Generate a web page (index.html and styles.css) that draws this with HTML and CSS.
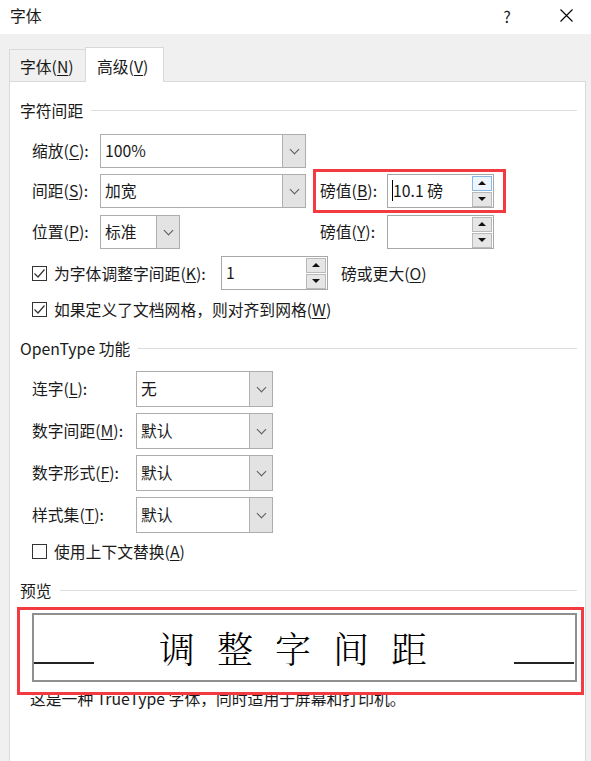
FILE: index.html
```html
<!DOCTYPE html>
<html lang="zh-CN">
<head>
  <meta charset="UTF-8" />
  <meta name="viewport" content="width=device-width, initial-scale=1.0" />
  <title>字体</title>
  <link rel="stylesheet" href="styles.css">
</head>
<body>
  <div class="dialog">

    <!-- Title bar -->
    <div class="title-bar">
      <div class="title">字体</div>
      <div class="title-btn help">?</div>
      <div class="title-btn close">
        <svg width="13" height="13" viewBox="0 0 13 13">
          <path d="M0.5 0.5 L12.5 12.5 M12.5 0.5 L0.5 12.5" stroke="#000" stroke-width="1.1" fill="none"/>
        </svg>
      </div>
    </div>

    <!-- Tabs -->
    <div class="tabs">
      <div class="tab">字体(<u>N</u>)</div>
      <div class="tab active">高级(<u>V</u>)</div>
    </div>

    <div class="panel">

      <!-- 字符间距 -->
      <div class="group-title">字符间距</div>

      <div class="row first">
        <div class="row-left">
          <span class="lbl">缩放(<u>C</u>):</span>
          <div class="select wide"><span class="value">100%</span><span class="drop"></span></div>
        </div>
      </div>

      <div class="row">
        <div class="row-left">
          <span class="lbl">间距(<u>S</u>):</span>
          <div class="select wide"><span class="value">加宽</span><span class="drop"></span></div>
        </div>
        <div class="highlight">
          <span class="lbl-pt">磅值(<u>B</u>):</span>
          <div class="spin-input">
            <span class="value"><span class="caret"></span>10.1 磅</span>
            <span class="spin focus"><span class="up"></span><span class="down"></span></span>
          </div>
        </div>
      </div>

      <div class="row third">
        <div class="row-left">
          <span class="lbl">位置(<u>P</u>):</span>
          <div class="select narrow"><span class="value">标准</span><span class="drop"></span></div>
        </div>
        <div class="pt-group">
          <span class="lbl-pt">磅值(<u>Y</u>):</span>
          <div class="spin-input">
            <span class="value"></span>
            <span class="spin"><span class="up"></span><span class="down"></span></span>
          </div>
        </div>
      </div>

      <div class="row kern">
        <div class="check-label kern-label">
          <span class="checkbox checked">
            <svg width="15" height="15" viewBox="0 0 15 15"><polyline points="2.5,7.5 6,11 12.5,3.5" fill="none" stroke="#333" stroke-width="1.2"/></svg>
          </span>
          <span>为字体调整字间距(<u>K</u>):</span>
        </div>
        <div class="spin-input">
          <span class="value">1</span>
          <span class="spin"><span class="up"></span><span class="down"></span></span>
        </div>
        <span class="after-spin">磅或更大(<u>O</u>)</span>
      </div>

      <div class="row check-row grid-row">
        <div class="check-label">
          <span class="checkbox checked">
            <svg width="15" height="15" viewBox="0 0 15 15"><polyline points="2.5,7.5 6,11 12.5,3.5" fill="none" stroke="#333" stroke-width="1.2"/></svg>
          </span>
          <span>如果定义了文档网格，则对齐到网格(<u>W</u>)</span>
        </div>
      </div>

      <!-- OpenType -->
      <div class="group-title">OpenType 功能</div>

      <div class="row ot first-ot">
        <span class="lbl lbl-ot">连字(<u>L</u>):</span>
        <div class="select ot-select"><span class="value">无</span><span class="drop"></span></div>
      </div>
      <div class="row ot">
        <span class="lbl lbl-ot">数字间距(<u>M</u>):</span>
        <div class="select ot-select"><span class="value">默认</span><span class="drop"></span></div>
      </div>
      <div class="row ot">
        <span class="lbl lbl-ot">数字形式(<u>F</u>):</span>
        <div class="select ot-select"><span class="value">默认</span><span class="drop"></span></div>
      </div>
      <div class="row ot">
        <span class="lbl lbl-ot">样式集(<u>T</u>):</span>
        <div class="select ot-select"><span class="value">默认</span><span class="drop"></span></div>
      </div>

      <div class="row check-row context-row">
        <div class="check-label">
          <span class="checkbox"></span>
          <span>使用上下文替换(<u>A</u>)</span>
        </div>
      </div>

      <!-- Preview -->
      <div class="group-title">预览</div>

      <div class="preview-mark">
        <div class="preview-box">
          <span class="rule"></span>
          <span class="sample">调整字间距</span>
          <span class="rule right"></span>
        </div>
      </div>
      <div class="note">这是一种 TrueType 字体，同时适用于屏幕和打印机。</div>

    </div>
  </div>
</body>
</html>
```

FILE: styles.css
```css
* {
  box-sizing: border-box;
  margin: 0;
  padding: 0;
}

html, body {
  height: 100%;
}

body {
  background: #f0f0f0;
  font-family: "Noto Sans CJK SC", "Noto Sans", sans-serif;
  font-size: 15.8px;
  color: #1a1a1a;
  overflow: hidden;
}

u {
  text-decoration: underline;
  text-decoration-thickness: 1px;
  text-underline-offset: 2px;
}

.dialog {
  display: flex;
  flex-direction: column;
  height: 100vh;
}

/* title bar */
.title-bar {
  height: 34px;
  background: #fff;
  display: flex;
  align-items: center;
  padding: 0 0 3px 10px;
}

.title {
  flex: 1;
}

.title-btn {
  display: flex;
  justify-content: center;
  align-items: center;
}

.help {
  width: 68px;
  font-size: 16px;
}

.close {
  width: 50px;
}

/* tabs */
.tabs {
  display: flex;
  align-items: flex-end;
  height: 34px;
  margin-top: 13px;
  padding-left: 9px;
}

.tab {
  height: 32px;
  width: 76px;
  padding: 1px 0 0 10px;
  display: flex;
  align-items: center;
  border: 1px solid #d9d9d9;
  border-bottom: none;
  border-right: none;
}

.tab.active {
  height: 35px;
  width: 79px;
  margin-bottom: -1px;
  padding-left: 11px;
  padding-top: 3px;
  background: #fff;
  border-right: 1px solid #d9d9d9;
  position: relative;
  z-index: 1;
}

/* panel */
.panel {
  flex: 1;
  margin: 0 5px 0 9px;
  background: #fff;
  border: 1px solid #d9d9d9;
  border-bottom: none;
  padding: 0 8px 0 10px;
}

.group-title {
  display: flex;
  align-items: center;
  height: 20px;
  margin-top: 19px;
}

.group-title:first-child {
  margin-top: 18px;
}

.group-title::after {
  content: "";
  flex: 1;
  height: 1px;
  background: #dcdcdc;
  margin-left: 8px;
}

.row {
  display: flex;
  align-items: center;
  height: 34px;
  margin-top: 6px;
  padding-left: 12px;
}

.row.first {
  margin-top: 14px;
}

.row.third {
  margin-top: 7px;
}

.row-left {
  display: flex;
  align-items: center;
  width: 281px;
}

.lbl {
  width: 68px;
  flex-shrink: 0;
  margin-top: -2px;
}

.lbl-ot {
  width: 104px;
}

/* combo boxes */
.select {
  display: flex;
  height: 34px;
  border: 1px solid #adadad;
  background: #fff;
}

.select.wide {
  width: 206px;
}

.select.narrow {
  width: 80px;
}

.select.ot-select {
  width: 137px;
  height: 36px;
}

.select .value {
  flex: 1;
  padding: 0 0 2px 4px;
  display: flex;
  align-items: center;
}

.select .drop {
  width: 23px;
  background: #e3e3e3;
  border-left: 1px solid #b0b0b0;
  display: flex;
  justify-content: center;
  align-items: center;
}

.select .drop::after {
  content: "";
  width: 6px;
  height: 6px;
  border-right: 1px solid #5a5a5a;
  border-bottom: 1px solid #5a5a5a;
  transform: rotate(45deg);
  margin-top: -4px;
}

/* spin boxes */
.highlight {
  display: flex;
  align-items: center;
  width: 193px;
  height: 44px;
  margin: -5px 0;
  padding: 0 9px 0 4px;
  border: 3px solid #f23a40;
}

.pt-group {
  display: flex;
  align-items: center;
  padding-left: 7px;
}

.lbl-pt {
  width: 67px;
  flex-shrink: 0;
  margin-top: -2px;
}

.spin-input {
  display: flex;
  align-items: center;
  width: 107px;
  height: 34px;
  border: 1px solid #a8a8a8;
  padding-right: 1px;
  background: #fff;
}

.spin-input .value {
  flex: 1;
  padding: 0 0 2px 4px;
  display: flex;
  align-items: center;
}

.caret {
  width: 1px;
  height: 21px;
  background: #000;
}

.spin {
  display: flex;
  flex-direction: column;
  width: 20px;
}

.spin span {
  height: 15px;
  background: #e6e6e6;
  border: 1px solid #b9b9b9;
  display: flex;
  justify-content: center;
  align-items: center;
}

.spin span + span {
  margin-top: 1px;
}

.spin.focus .up {
  border-color: #86b9ec;
  background: #eef5fc;
}

.spin .up::after,
.spin .down::after {
  content: "";
  border-left: 4px solid transparent;
  border-right: 4px solid transparent;
}

.spin .up::after {
  border-bottom: 4px solid #111;
}

.spin .down::after {
  border-top: 4px solid #111;
}

/* check boxes */
.row.kern {
  margin-top: 7px;
}

.check-label {
  display: flex;
  align-items: center;
}

.kern-label {
  width: 189px;
}

.checkbox {
  width: 15px;
  height: 15px;
  border: 1px solid #333;
  margin-right: 7px;
  display: flex;
  flex-shrink: 0;
}

.checkbox svg {
  margin: -1px;
}

.after-spin {
  margin-left: 13px;
}

.row.check-row {
  height: 20px;
}

.row.grid-row {
  margin-top: 9px;
}

.row.ot {
  height: 36px;
}

.row.first-ot {
  margin-top: 13px;
}

.row.context-row {
  margin-top: 8px;
}

/* preview */
.preview-mark {
  position: relative;
  z-index: 1;
  height: 88px;
  margin: 7px -7px 0 -3px;
  padding: 3px 4px 10px 12px;
  border: 3px solid #f23a40;
  background: #fff;
}

.preview-box {
  display: flex;
  align-items: center;
  height: 69px;
  border: 2px solid #8f8f8f;
  padding: 0 1px 0 0;
}

.rule {
  width: 60px;
  height: 2px;
  background: #222;
  align-self: flex-end;
  margin-bottom: 16px;
}

.sample {
  flex: 1;
  text-align: center;
  font-family: "FangSong", "KaiTi", "Noto Serif CJK SC", "Noto Sans CJK SC", serif;
  font-size: 36px;
  font-weight: 300;
  line-height: 40px;
  letter-spacing: 22px;
  color: #000;
  margin-top: 0;
}

.note {
  margin-top: -6px;
  padding-left: 10px;
  line-height: 20px;
}
```
